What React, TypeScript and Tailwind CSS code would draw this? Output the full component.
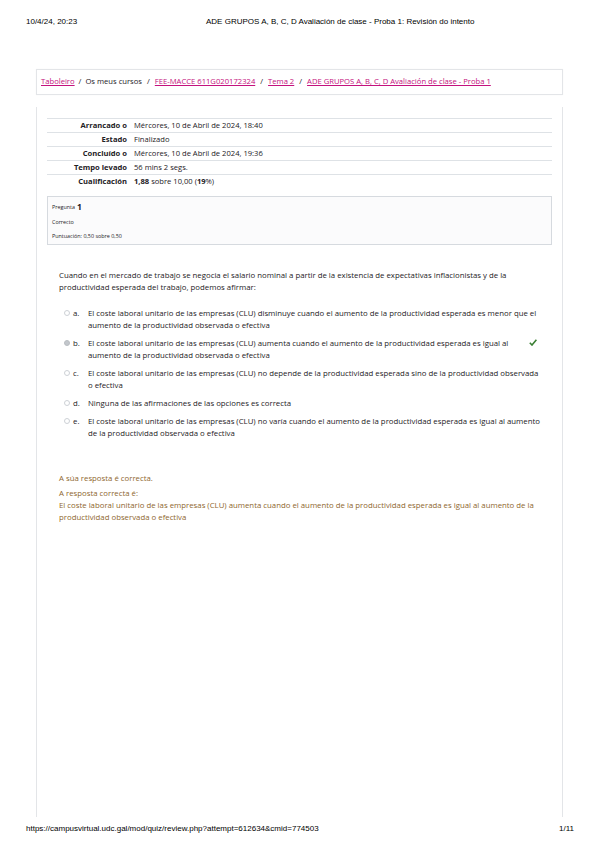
import React from "react";

const sans = { fontFamily: '"Open Sans", "Noto Sans", sans-serif' };

function Radio({ checked }: { checked?: boolean }) {
  return (
    <span className="flex h-[12px] w-[8px] shrink-0 items-center">
      <span
        className={
          "block h-[6px] w-[6px] rounded-full border " +
          (checked ? "border-[#b9bdc2] bg-[#c3c7cc]" : "border-[#cdd1d6] bg-white")
        }
      />
    </span>
  );
}

const options = [
  {
    l: "a.",
    t: "El coste laboral unitario de las empresas (CLU) disminuye cuando el aumento de la productividad esperada es menor que el aumento de la productividad observada o efectiva",
  },
  {
    l: "b.",
    t: "El coste laboral unitario de las empresas (CLU) aumenta cuando el aumento de la productividad esperada es igual al aumento de la productividad observada o efectiva",
    checked: true,
  },
  {
    l: "c.",
    t: "El coste laboral unitario de las empresas (CLU) no depende de la productividad esperada sino de la productividad observada o efectiva",
  },
  { l: "d.", t: "Ninguna de las afirmaciones de las opciones es correcta" },
  {
    l: "e.",
    t: "El coste laboral unitario de las empresas (CLU) no varía cuando el aumento de la productividad esperada es igual al aumento de la productividad observada o efectiva",
  },
];

const rows: [string, React.ReactNode][] = [
  ["Arrancado o", "Mércores, 10 de Abril de 2024, 18:40"],
  ["Estado", "Finalizado"],
  ["Concluído o", "Mércores, 10 de Abril de 2024, 19:36"],
  ["Tempo levado", "56 mins 2 segs."],
  [
    "Cualificación",
    <>
      <b>1,88</b> sobre 10,00 (<b>19</b>%)
    </>,
  ],
];

export default function App() {
  return (
    <div className="relative flex h-[848px] w-[599px] flex-col overflow-hidden bg-white">
      {/* print header */}
      <div
        className="flex h-[44px] items-center pl-[26px] text-[8px] text-black"
        style={{ fontFamily: '"Liberation Sans", Arial, sans-serif' }}
      >
        <span className="w-[180px]">10/4/24, 20:23</span>
        <span>ADE GRUPOS A, B, C, D Avaliación de clase - Proba 1: Revisión do intento</span>
      </div>

      {/* breadcrumb */}
      <div
        className="ml-[36px] mt-[25px] flex h-[26px] w-[527px] items-center border border-[#e3e5e8] px-[4px] text-[7.65px] text-[#1d2125] shadow-[0_0_1px_rgba(0,0,0,0.05)]"
        style={sans}
      >
        <span className="text-[#c4117e] underline">Taboleiro</span>
        <span className="mx-[4px]">/</span>
        <span>Os meus cursos</span>
        <span className="mx-[5px]">/</span>
        <span className="text-[#c4117e] underline">FEE-MACCE 611G020172324</span>
        <span className="mx-[5px]">/</span>
        <span className="text-[#c4117e] underline">Tema 2</span>
        <span className="mx-[5px]">/</span>
        <span className="text-[#c4117e] underline">
          ADE GRUPOS A, B, C, D Avaliación de clase - Proba 1
        </span>
      </div>

      {/* main region */}
      <div
        className="ml-[36px] mt-[12px] h-[710px] w-[527px] border-x border-[#e3e5e8] px-[10px] pt-[11px] text-[7.6px] text-[#1d2125]"
        style={sans}
      >
        <div className="flex flex-col">
          {rows.map(([k, v]) => (
            <div key={k} className="flex h-[14px] items-center border-t border-[#dee2e6]">
              <span className="w-[87px] shrink-0 pr-[7px] text-right font-bold">{k}</span>
              <span>{v}</span>
            </div>
          ))}
        </div>

        {/* info box */}
        <div className="mt-[8px] flex h-[49px] flex-col border border-[#d6dadf] bg-[#fbfbfc] px-[4px] pt-[3px] text-[5.4px]">
          <div className="flex h-[15px] items-center">
            <span>Pregunta</span>
            <span className="ml-[2px] text-[8.5px] font-bold">1</span>
          </div>
          <div className="flex h-[14px] items-center">Correcto</div>
          <div className="flex h-[14px] items-center">Puntuación: 0,50 sobre 0,50</div>
        </div>

        {/* question */}
        <div className="ml-[12px] mt-[24px] w-[486px] text-[7.8px] leading-[12px]">
          <p>
            Cuando en el mercado de trabajo se negocia el salario nominal a partir de la existencia
            de expectativas inflacionistas y de la productividad esperada del trabajo, podemos
            afirmar:
          </p>
          <div className="mt-[14px] flex flex-col gap-[6px]">
            {options.map((o) => (
              <div key={o.l} className="flex pl-[5px]">
                <Radio checked={o.checked} />
                <span className="w-[16px] shrink-0 pl-[1px]">{o.l}</span>
                <span className={o.checked ? "w-[432px]" : "w-[453px]"}>{o.t}</span>
                {o.checked && (
                  <svg
                    className="ml-[9px] mt-[2px] shrink-0"
                    width="8"
                    height="7"
                    viewBox="0 0 8 7"
                  >
                    <path d="M0.8 3.8 L3 6 L7.4 0.8" fill="none" stroke="#3a7f33" strokeWidth="1.6" />
                  </svg>
                )}
              </div>
            ))}
          </div>

          {/* feedback */}
          <div className="mt-[33px] text-[#8e662e]">
            <p>A súa resposta é correcta.</p>
            <p className="mt-[3px]">A resposta correcta é:</p>
            <p>
              El coste laboral unitario de las empresas (CLU) aumenta cuando el aumento de la
              productividad esperada es igual al aumento de la productividad observada o efectiva
            </p>
          </div>
        </div>
      </div>

      {/* print footer */}
      <div
        className="flex h-[24px] items-center justify-between pl-[26px] pr-[25px] text-[8px] text-black"
        style={{ fontFamily: '"Liberation Sans", Arial, sans-serif' }}
      >
        <span>https://campusvirtual.udc.gal/mod/quiz/review.php?attempt=612634&amp;cmid=774503</span>
        <span>1/11</span>
      </div>
    </div>
  );
}
